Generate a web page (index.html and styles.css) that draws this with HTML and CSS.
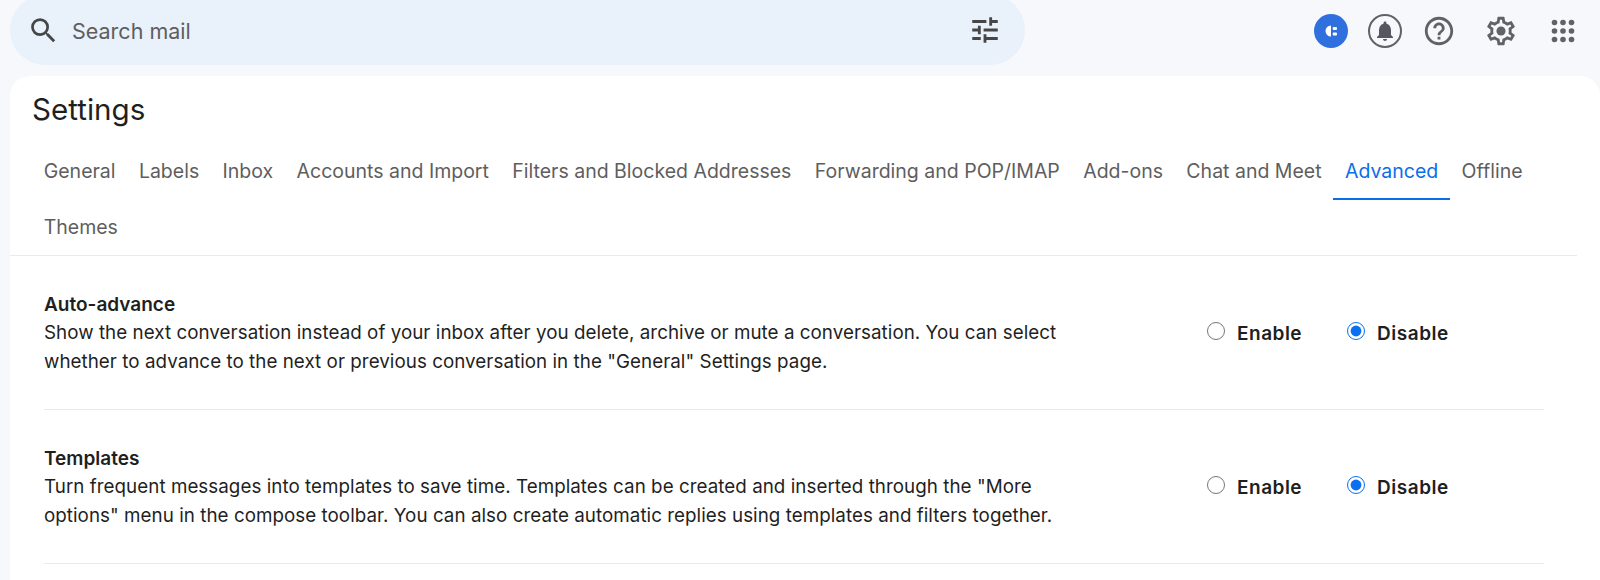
FILE: index.html
```html
<!DOCTYPE html>
<html lang="en">
<head>
    <meta charset="UTF-8">
    <title>Settings - Mail</title>
    <link rel="stylesheet" href="styles.css">
</head>
<body>

<header class="topbar">
    <div class="search">
        <svg class="search-icon" viewBox="0 0 24 24"><path d="M15.5 14h-.79l-.28-.27A6.47 6.47 0 0 0 16 9.5 6.5 6.5 0 1 0 9.500 16c1.610 0 3.090-.59 4.230-1.570l.27.28v.79l5 4.990L20.490 19l-4.990-5zm-6 0C7.010 14 5 11.990 5 9.500S7.010 5 9.500 5 14 7.010 14 9.500 11.990 14 9.500 14z"/></svg>
        <span class="search-text">Search mail</span>
        <svg class="tune-icon" viewBox="0 0 24 24"><path d="M3 17v2h6v-2H3zM3 5v2h10V5H3zm10 16v-2h8v-2h-8v-2h-2v6h2zM7 9v2H3v2h4v2h2V9H7zm14 4v-2H11v2h10zm-6-4h2V7h4V5h-4V3h-2v6z"/></svg>
    </div>
    <div class="actions">
        <span class="status-dot">
            <svg viewBox="0 0 34 34"><path d="M17 11.500v11a5.500 5.500 0 0 1 0-11z"/><rect x="18.700" y="13" width="4.300" height="3" rx="1"/><rect x="18.700" y="18.500" width="4.300" height="3" rx="1"/></svg>
        </span>
        <span class="ring">
            <svg viewBox="0 0 24 24"><path d="M12 22c1.100 0 2-.9 2-2h-4c0 1.100.9 2 2 2zm6-6v-5c0-3.070-1.630-5.640-4.500-6.320V4c0-.83-.67-1.500-1.500-1.500s-1.500.67-1.500 1.500v.68C7.640 5.360 6 7.920 6 11v5l-2 2v1h16v-1l-2-2z"/></svg>
        </span>
        <svg class="icon" viewBox="0 0 24 24"><path d="M11 18h2v-2h-2v2zm1-16C6.480 2 2 6.480 2 12s4.480 10 10 10 10-4.480 10-10S17.520 2 12 2zm0 18c-4.410 0-8-3.590-8-8s3.590-8 8-8 8 3.590 8 8-3.590 8-8 8zm0-14c-2.210 0-4 1.790-4 4h2c0-1.100.9-2 2-2s2 .9 2 2c0 2-3 1.750-3 5h2c0-2.250 3-2.500 3-5 0-2.210-1.790-4-4-4z"/></svg>
        <svg class="icon gear" viewBox="0 0 24 24"><path d="M19.430 12.980c.04-.32.07-.64.07-.98 0-.34-.03-.66-.07-.98l2.110-1.650c.19-.15.24-.42.12-.64l-2-3.460c-.09-.16-.26-.25-.44-.25-.06 0-.12.01-.17.03l-2.490 1c-.52-.4-1.080-.73-1.690-.98l-.38-2.650C14.460 2.180 14.250 2 14 2h-4c-.25 0-.46.18-.49.42l-.38 2.650c-.61.25-1.170.59-1.690.98l-2.490-1c-.06-.02-.12-.03-.18-.03-.17 0-.34.09-.43.25l-2 3.460c-.13.22-.07.49.12.64l2.110 1.650c-.04.32-.07.65-.07.98 0 .33.03.66.07.98l-2.110 1.650c-.19.15-.24.42-.12.64l2 3.460c.09.16.26.25.44.25.06 0 .12-.01.17-.03l2.490-1c.52.4 1.080.73 1.690.98l.38 2.650c.03.24.24.42.49.42h4c.25 0 .46-.18.49-.42l.38-2.650c.61-.25 1.170-.59 1.690-.98l2.490 1c.06.02.12.03.18.03.17 0 .34-.09.43-.25l2-3.460c.12-.22.07-.49-.12-.64l-2.110-1.650zm-1.980-1.710c.04.31.05.52.05.73 0 .21-.02.43-.05.73l-.14 1.130.89.7 1.080.84-.7 1.210-1.270-.51-1.040-.42-.9.68c-.43.32-.84.56-1.250.73l-1.060.43-.16 1.130-.2 1.350h-1.400l-.19-1.350-.16-1.130-1.060-.43c-.43-.18-.83-.41-1.230-.71l-.91-.7-1.060.43-1.270.51-.7-1.210 1.080-.84.89-.7-.14-1.130c-.03-.31-.05-.54-.05-.74s.02-.43.05-.73l.14-1.130-.89-.7-1.080-.84.7-1.210 1.270.51 1.040.42.9-.68c.43-.32.84-.56 1.250-.73l1.060-.43.16-1.130.2-1.350h1.390l.19 1.350.16 1.130 1.060.43c.43.18.83.41 1.230.71l.91.7 1.060-.43 1.270-.51.7 1.210-1.070.85-.89.7.14 1.130z"/><circle cx="12" cy="12" r="3.200"/></svg>
        <svg class="grid" viewBox="0 0 24 24"><circle cx="3.500" cy="3.500" r="2.800"/><circle cx="12" cy="3.500" r="2.800"/><circle cx="20.500" cy="3.500" r="2.800"/><circle cx="3.500" cy="12" r="2.800"/><circle cx="12" cy="12" r="2.800"/><circle cx="20.500" cy="12" r="2.800"/><circle cx="3.500" cy="20.500" r="2.800"/><circle cx="12" cy="20.500" r="2.800"/><circle cx="20.500" cy="20.500" r="2.800"/></svg>
    </div>
</header>

<main class="panel">
    <h1 class="title">Settings</h1>
    <nav class="tabs">
        <a class="tab">General</a>
        <a class="tab">Labels</a>
        <a class="tab">Inbox</a>
        <a class="tab">Accounts and Import</a>
        <a class="tab">Filters and Blocked Addresses</a>
        <a class="tab">Forwarding and POP/IMAP</a>
        <a class="tab">Add-ons</a>
        <a class="tab">Chat and Meet</a>
        <a class="tab selected">Advanced</a>
        <a class="tab">Offline</a>
        <a class="tab">Themes</a>
    </nav>

    <section class="setting">
        <div class="setting-text">
            <div class="setting-name">Auto-advance</div>
            <p class="setting-desc">Show the next conversation instead of your inbox after you delete, archive or mute a conversation. You can select whether to advance to the next or previous conversation in the "General" Settings page.</p>
        </div>
        <div class="options">
            <label class="option"><input type="radio" name="auto"> Enable</label>
            <label class="option"><input type="radio" name="auto" checked> Disable</label>
        </div>
    </section>

    <section class="setting">
        <div class="setting-text">
            <div class="setting-name">Templates</div>
            <p class="setting-desc">Turn frequent messages into templates to save time. Templates can be created and inserted through the "More options" menu in the compose toolbar. You can also create automatic replies using templates and filters together.</p>
        </div>
        <div class="options">
            <label class="option"><input type="radio" name="tpl"> Enable</label>
            <label class="option"><input type="radio" name="tpl" checked> Disable</label>
        </div>
    </section>
</main>

</body>
</html>
```

FILE: styles.css
```css
* {
    box-sizing: border-box;
}
html, body {
    height: 100%;
}
body {
    margin: 0;
    background-color: #f6f8fc;
    font-family: "Inter", "Roboto", sans-serif;
    color: #1f1f1f;
    overflow: hidden;
}
.topbar {
    display: flex;
    align-items: center;
    justify-content: space-between;
    height: 76px;
    padding: 0 25px 14px 10px;
}
/* the pill runs a little past the top of the window */
.search {
    display: flex;
    align-items: center;
    width: 1015px;
    height: 70px;
    margin-top: -2px;
    padding: 0 23px 0 17px;
    border-radius: 35px;
    background-color: #e9f1fb;
}
.search-icon {
    width: 33px;
    height: 33px;
    fill: #444746;
}
.search-text {
    flex: 1;
    margin-left: 12px;
    padding-top: 1px;
    font-size: 21.5px;
    color: #5e5e5e;
}
.tune-icon {
    width: 34px;
    height: 34px;
    fill: #444746;
}
.actions {
    display: flex;
    align-items: center;
    gap: 20px;
}
.status-dot {
    width: 34px;
    height: 34px;
    border-radius: 50%;
    background-color: #2f6fde;
}
.status-dot svg {
    display: block;
    fill: #fff;
}
.ring {
    width: 34px;
    height: 34px;
    padding: 3px;
    border: 2px solid #5f6368;
    border-radius: 50%;
}
.ring svg {
    display: block;
    fill: #55585e;
}
.icon {
    width: 34px;
    height: 34px;
    fill: #5f6368;
}
.gear {
    margin-left: 8px;
}
.grid {
    width: 24px;
    height: 24px;
    margin-left: 13px;
    fill: #5f6368;
}
.panel {
    width: 1590px;
    height: 504px;
    margin-left: 10px;
    padding-right: 23px;
    border-radius: 20px 20px 0 0;
    background-color: #fff;
}
.title {
    height: 68px;
    margin: 0;
    padding: 15px 0 0 22px;
    font-size: 29.6px;
    font-weight: 400;
    color: #1f1f1f;
}
.tabs {
    display: flex;
    flex-wrap: wrap;
    height: 112px;
    padding: 0 0 0 22px;
    border-bottom: 1px solid #e8eaed;
}
.tab {
    height: 56px;
    padding: 0 11.7px;
    line-height: 54px;
    font-size: 19.5px;
    color: #5e5e5e;
}
.tab.selected {
    color: #0b6ee8;
    border-bottom: 2px solid #0b6ee8;
}
.setting {
    display: flex;
    height: 154px;
    margin: 0 33px 0 34px;
    padding-top: 35px;
    border-bottom: 1px solid #e8eaed;
}
.setting-text {
    width: 1163px;
}
.setting-name {
    font-size: 19px;
    font-weight: 600;
    line-height: 28px;
}
.setting-desc {
    max-width: 1020px;
    margin: 0;
    font-size: 18.8px;
    letter-spacing: 0.04px;
    line-height: 28.5px;
}
.options {
    display: flex;
    gap: 45px;
    padding-top: 28px;
}
.option {
    display: flex;
    align-items: center;
    gap: 12px;
    height: 28px;
    font-size: 19px;
    font-weight: 600;
    letter-spacing: 0.5px;
}
.option input {
    width: 18px;
    height: 18px;
    margin: -4px 0 0;
    accent-color: #0b6ff0;
}
```
